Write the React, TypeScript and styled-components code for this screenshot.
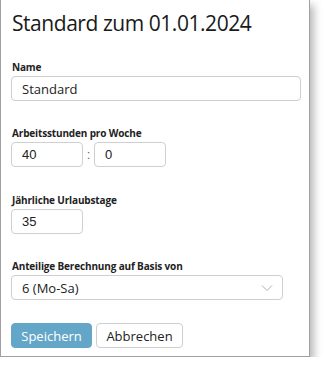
import React from "react";
import styled, { createGlobalStyle } from "styled-components";

const Global = createGlobalStyle`
  html, body { margin: 0; padding: 0; background: #fff; }
  body { font-family: "Open Sans", "Noto Sans", sans-serif; color: #222; }
`;

const Panel = styled.div`
  box-sizing: border-box;
  width: 310px;
  height: 357px;
  border: 1px solid #a0a0a0;
  border-top: none;
  background: #fff;
  box-shadow: 4px 5px 8px rgba(0, 0, 0, 0.28);
  padding: 8px 10px 0 10px;
  display: flex;
  flex-direction: column;
`;

const Title = styled.h1`
  margin: 0 0 0 1px;
  font-size: 21px;
  font-weight: 400;
  line-height: 30px;
  color: #1a1a1a;
  letter-spacing: -0.45px;
`;

const Field = styled.div<{ $top: number }>`
  margin-top: ${(p) => p.$top}px;
  display: flex;
  flex-direction: column;
`;

const Label = styled.label`
  font-size: 10px;
  font-weight: 700;
  line-height: 14px;
  margin: 0 0 2px 1px;
  color: #222;
  letter-spacing: -0.15px;
`;

const Row = styled.div`
  display: flex;
  align-items: center;
`;

const Input = styled.input<{ $w: number; $mono?: boolean }>`
  box-sizing: border-box;
  width: ${(p) => p.$w}px;
  height: 25px;
  border: 1px solid #cfcfcf;
  border-radius: 4px;
  padding: 0 10px;
  font-family: ${(p) => (p.$mono ? '"Liberation Sans", Arial, sans-serif' : '"Open Sans", sans-serif')};
  font-size: 13px;
  color: #222;
  outline: none;
`;

const Colon = styled.span`
  width: 11px;
  text-align: center;
  font-family: "Liberation Sans", Arial, sans-serif;
  font-size: 13px;
  color: #666;
`;

const Select = styled.div`
  box-sizing: border-box;
  width: 272px;
  height: 25px;
  border: 1px solid #cfcfcf;
  border-radius: 4px;
  padding: 0 9px 0 10px;
  display: flex;
  align-items: center;
  justify-content: space-between;
  font-size: 13px;
  color: #222;
`;

const Buttons = styled.div`
  margin-top: 23px;
  display: flex;
  gap: 4px;
`;

const Button = styled.button<{ $primary?: boolean }>`
  box-sizing: border-box;
  height: 25px;
  padding: 0;
  width: ${(p) => (p.$primary ? 81 : 87)}px;
  border-radius: 4px;
  font-family: "Open Sans", sans-serif;
  font-size: 13px;
  cursor: pointer;
  border: 1px solid ${(p) => (p.$primary ? "#64a6c8" : "#cfcfcf")};
  background: ${(p) => (p.$primary ? "#64a6c8" : "#fff")};
  color: ${(p) => (p.$primary ? "#fff" : "#222")};
`;

export default function App() {
  return (
    <>
      <Global />
      <Panel>
        <Title>Standard zum 01.01.2024</Title>
        <Field $top={22}>
          <Label>Name</Label>
          <Input $w={290} defaultValue="Standard" />
        </Field>
        <Field $top={25}>
          <Label>Arbeitsstunden pro Woche</Label>
          <Row>
            <Input $w={72} $mono defaultValue="40" />
            <Colon>:</Colon>
            <Input $w={72} $mono defaultValue="0" />
          </Row>
        </Field>
        <Field $top={26}>
          <Label>Jährliche Urlaubstage</Label>
          <Input $w={72} $mono defaultValue="35" />
        </Field>
        <Field $top={25}>
          <Label>Anteilige Berechnung auf Basis von</Label>
          <Select>
            <span>6 (Mo-Sa)</span>
            <svg width="12" height="8" viewBox="0 0 12 8">
              <path d="M1 1.5 L6 6.5 L11 1.5" fill="none" stroke="#b0b0b0" strokeWidth="1" />
            </svg>
          </Select>
        </Field>
        <Buttons>
          <Button $primary>Speichern</Button>
          <Button>Abbrechen</Button>
        </Buttons>
      </Panel>
    </>
  );
}
